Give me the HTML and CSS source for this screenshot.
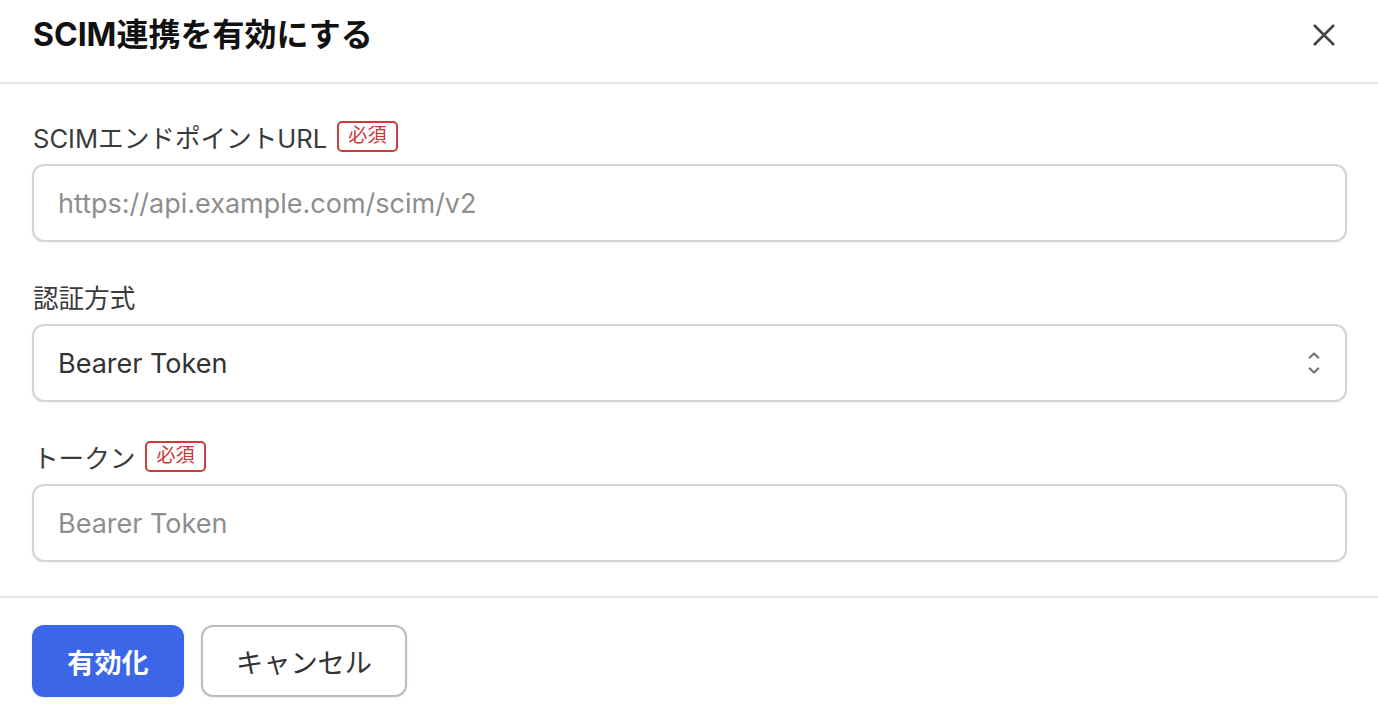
FILE: index.html
```html
<!DOCTYPE html>
<html lang="ja">
<head>
<meta charset="utf-8">
<title>SCIM連携を有効にする</title>
<link rel="stylesheet" href="styles.css">
</head>
<body>
<div class="dialog">
  <header class="dialog-header">
    <h1 class="dialog-title">SCIM連携を有効にする</h1>
    <button class="close-btn" aria-label="閉じる">
      <svg width="24" height="24" viewBox="0 0 24 24" fill="none" stroke="#444" stroke-width="2.6" stroke-linecap="butt">
        <path d="M2 2 L22 22 M22 2 L2 22"/>
      </svg>
    </button>
  </header>
  <main class="dialog-body">
    <div class="field">
      <label class="field-label">SCIMエンドポイントURL<span class="badge">必須</span></label>
      <input class="text-input" type="text" placeholder="https://api.example.com/scim/v2">
    </div>
    <div class="field">
      <label class="field-label">認証方式</label>
      <div class="select-box">
        <span class="select-value">Bearer Token</span>
        <svg class="chevrons" width="12" height="26" viewBox="0 0 12 26" fill="none" stroke="#777" stroke-width="2.4" stroke-linecap="round" stroke-linejoin="round">
          <path d="M1.8 7.5 L6 3.5 L10.2 7.5"/>
          <path d="M1.8 18.5 L6 22.5 L10.2 18.5"/>
        </svg>
      </div>
    </div>
    <div class="field">
      <label class="field-label">トークン<span class="badge">必須</span></label>
      <input class="text-input" type="text" placeholder="Bearer Token">
    </div>
  </main>
  <footer class="dialog-footer">
    <button class="btn btn-primary">有効化</button>
    <button class="btn btn-secondary">キャンセル</button>
  </footer>
</div>
</body>
</html>
```
FILE: styles.css
```css
* { box-sizing: border-box; }
html, body {
  margin: 0;
  padding: 0;
  background: #ffffff;
}
body {
  font-family: Inter, "Noto Sans CJK JP", sans-serif;
  color: #333;
}
.dialog {
  width: 100%;
  background: #fff;
}
.dialog-header {
  display: flex;
  align-items: center;
  justify-content: space-between;
  height: 84px;
  padding: 0 42px 12px 33px;
  border-bottom: 2px solid #e6e6e6;
}
.dialog-title {
  margin: 0;
  font-size: 32px;
  font-weight: 700;
  color: #111;
  line-height: 40px;
}
.close-btn {
  background: none;
  border: none;
  padding: 0;
  width: 24px;
  height: 24px;
  display: flex;
  align-items: center;
  justify-content: center;
  cursor: pointer;
}
.dialog-body {
  display: flex;
  flex-direction: column;
  gap: 38px;
  padding: 36px 31px 34px 32px;
}
.field {
  display: flex;
  flex-direction: column;
  gap: 12px;
}
.field-label {
  display: flex;
  align-items: center;
  gap: 10px;
  height: 32px;
  font-size: 25.6px;
  color: #3a3a3a;
  padding-left: 1px;
}
.badge {
  display: inline-flex;
  align-items: center;
  justify-content: center;
  height: 31px;
  padding: 0 9px 1px;
  border: 2px solid #cf3b3b;
  border-radius: 5px;
  color: #cc3535;
  font-size: 19.2px;
  line-height: 1;
}
.text-input,
.select-box {
  width: 100%;
  height: 78px;
  border: 2px solid #d6d3d5;
  border-radius: 12px;
  padding: 0 24px;
  font-family: inherit;
  font-size: 27px;
  color: #333;
  background: #fff;
  box-shadow: 0 1px 3px rgba(0,0,0,0.05);
  outline: none;
}
.text-input::placeholder {
  color: #8e8e8e;
}
.select-box {
  display: flex;
  align-items: center;
  justify-content: space-between;
  padding-right: 25px;
}
.dialog-footer {
  display: flex;
  gap: 17px;
  border-top: 2px solid #e6e6e6;
  padding: 27px 32px 20px;
}
.btn {
  height: 72px;
  border-radius: 12px;
  font-family: inherit;
  font-size: 27.2px;
  cursor: pointer;
  box-shadow: 0 1px 3px rgba(0,0,0,0.08);
}
.btn-primary {
  width: 152px;
  background: #3a66e7;
  border: none;
  color: #fff;
  font-weight: 700;
}
.btn-secondary {
  width: 206px;
  background: #fff;
  border: 2px solid #bdbbbd;
  color: #333;
}
```
